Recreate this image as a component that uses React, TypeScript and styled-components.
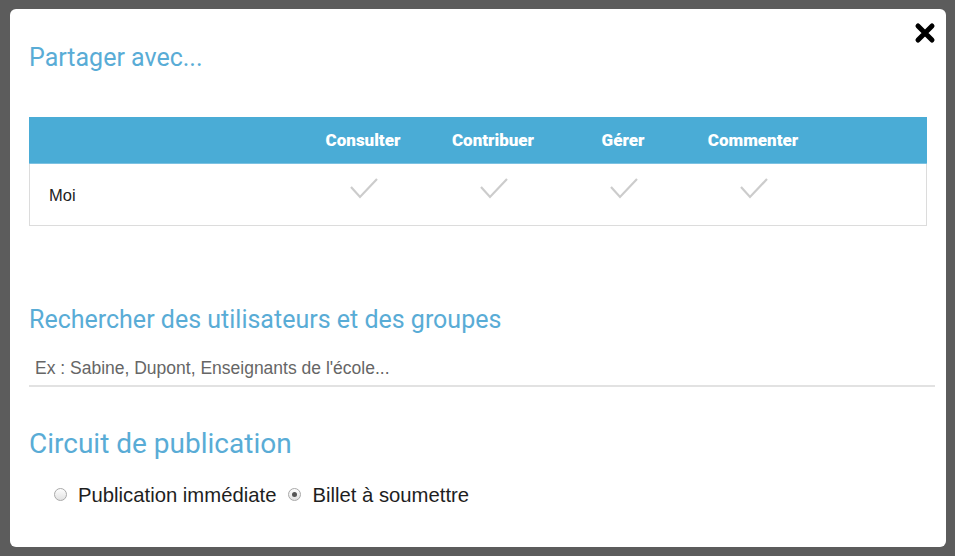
import React from "react";
import styled, { createGlobalStyle } from "styled-components";

const GlobalStyle = createGlobalStyle`
  html, body {
    margin: 0;
    padding: 0;
    background: #5c5c5c;
  }
  * {
    box-sizing: border-box;
  }
`;

const Backdrop = styled.div`
  width: 955px;
  height: 556px;
  padding: 9px 9px 9px 10px;
  background: #5c5c5c;
  overflow: hidden;
`;

const Modal = styled.div`
  position: relative;
  display: flex;
  flex-direction: column;
  height: 538px;
  padding: 34px 12px 0 19px;
  background: #fff;
  border-radius: 6px;
  font-family: "Liberation Sans", Arial, sans-serif;
`;

const CloseButton = styled.button`
  position: absolute;
  top: 13px;
  right: 10px;
  width: 22px;
  height: 22px;
  padding: 0;
  border: 0;
  background: transparent;
  cursor: pointer;
`;

const Heading = styled.h2<{ $size?: number }>`
  margin: 0;
  font-family: Roboto, "Open Sans", sans-serif;
  font-weight: 400;
  font-size: ${(p) => p.$size || 25}px;
  line-height: ${(p) => Math.round((p.$size || 25) * 1.17)}px;
  color: #59acd6;
`;

const Table = styled.div`
  margin-top: 45px;
  margin-right: 7px;
  border: 1px solid #dcdcdc;
  border-top: 0;
`;

const Row = styled.div<{ $header?: boolean }>`
  display: grid;
  grid-template-columns: 269px repeat(4, 130px) 1fr;
  align-items: center;
  height: ${(p) => (p.$header ? 47 : 61)}px;
  background: ${(p) => (p.$header ? "#4aacd6" : "#fff")};
  margin: ${(p) => (p.$header ? "0 -1px" : "0")};
  border-bottom: ${(p) => (p.$header ? "1px solid #7cc2e2" : "0")};
`;

const HeadCell = styled.div`
  text-align: center;
  font-family: Roboto, sans-serif;
  font-weight: 900;
  font-size: 17px;
  color: #fff;
  padding-bottom: 1px;
`;

const NameCell = styled.div`
  padding-left: 19px;
  padding-top: 2px;
  font-size: 16.5px;
  color: #222;
`;

const CheckCell = styled.div`
  display: flex;
  justify-content: center;
  padding-bottom: 13px;
`;

const SearchSection = styled.div`
  margin-top: 79px;
`;

const SearchInput = styled.input`
  display: block;
  width: 906px;
  height: 37px;
  margin-top: 16px;
  padding: 2px 6px 0;
  border: 0;
  border-bottom: 2px solid #e2e2e2;
  outline: none;
  font-family: "Liberation Sans", Arial, sans-serif;
  font-size: 17.5px;
  color: #333;

  &::placeholder {
    color: #666;
  }
`;

const CircuitSection = styled.div`
  margin-top: 40px;
`;

const RadioGroup = styled.div`
  display: flex;
  align-items: center;
  gap: 12px;
  margin-top: 23px;
  padding-left: 25px;
`;

const RadioLabel = styled.label`
  display: flex;
  align-items: center;
  gap: 11px;
  font-size: 20.3px;
  line-height: 24px;
  color: #1e1e1e;
`;

const RadioDot = styled.span<{ $checked?: boolean }>`
  position: relative;
  width: 13px;
  height: 13px;
  margin-bottom: 2px;
  border-radius: 50%;
  border: 1px solid #a9a9a9;
  background: linear-gradient(#fdfdfd, #e2e2e2);

  &::after {
    content: "";
    display: ${(p) => (p.$checked ? "block" : "none")};
    position: absolute;
    top: 3px;
    left: 3px;
    width: 5px;
    height: 5px;
    border-radius: 50%;
    background: #555;
  }
`;

function CloseIcon() {
  return (
    <svg width="22" height="22" viewBox="0 0 22 22">
      <path
        d="M4 4 L18 18 M18 4 L4 18"
        stroke="#000"
        strokeWidth="5"
        strokeLinecap="round"
      />
    </svg>
  );
}

function Check() {
  return (
    <svg width="30" height="24" viewBox="0 0 30 24">
      <polyline
        points="2,11 11,21 28,3"
        fill="none"
        stroke="#cccccc"
        strokeWidth="2.2"
      />
    </svg>
  );
}

const columns = ["Consulter", "Contribuer", "Gérer", "Commenter"];

export default function App() {
  return (
    <>
      <GlobalStyle />
      <Backdrop>
        <Modal>
          <CloseButton aria-label="Fermer">
            <CloseIcon />
          </CloseButton>
          <Heading>Partager avec...</Heading>

          <Table>
            <Row $header>
              <div />
              {columns.map((c) => (
                <HeadCell key={c}>{c}</HeadCell>
              ))}
              <div />
            </Row>
            <Row>
              <NameCell>Moi</NameCell>
              {columns.map((c) => (
                <CheckCell key={c}>
                  <Check />
                </CheckCell>
              ))}
              <div />
            </Row>
          </Table>

          <SearchSection>
            <Heading>Rechercher des utilisateurs et des groupes</Heading>
            <SearchInput placeholder="Ex : Sabine, Dupont, Enseignants de l'école..." />
          </SearchSection>

          <CircuitSection>
            <Heading $size={28}>Circuit de publication</Heading>
            <RadioGroup>
              <RadioLabel>
                <RadioDot />
                Publication immédiate
              </RadioLabel>
              <RadioLabel>
                <RadioDot $checked />
                Billet à soumettre
              </RadioLabel>
            </RadioGroup>
          </CircuitSection>
        </Modal>
      </Backdrop>
    </>
  );
}
